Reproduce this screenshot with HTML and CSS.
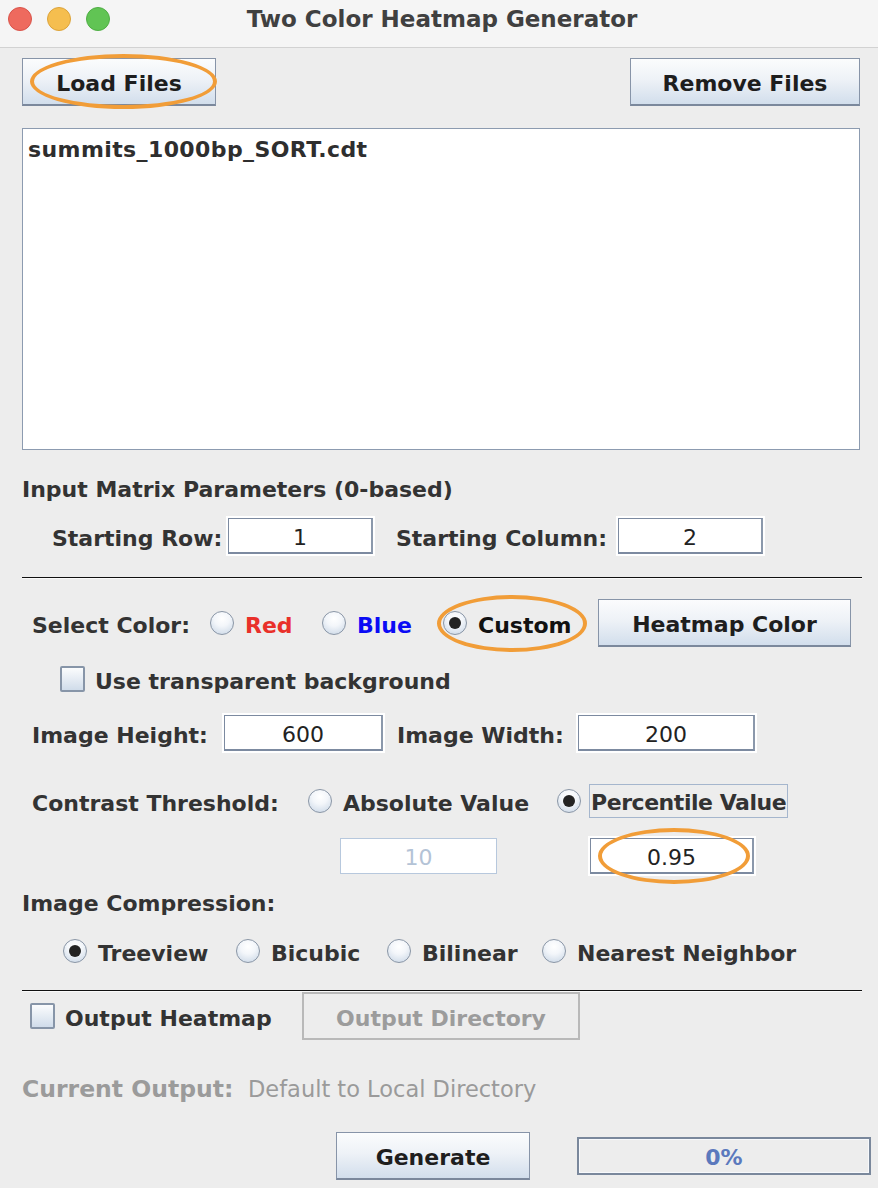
FILE: index.html
```html
<!DOCTYPE html>
<html>
<head>
<meta charset="utf-8">
<link rel="stylesheet" href="styles.css">
</head>
<body>
<div class="window">
  <div class="titlebar">
    <div class="lights">
      <span class="light red"></span>
      <span class="light yellow"></span>
      <span class="light green"></span>
    </div>
    <div class="title">Two Color Heatmap Generator</div>
  </div>
  <div class="content">
    <div class="row top-buttons">
      <div class="hl-wrap">
        <button class="btn btn-load">Load Files</button>
        <span class="ring ring-load"></span>
      </div>
      <button class="btn btn-remove">Remove Files</button>
    </div>

    <div class="filelist"><div class="file">summits_1000bp_SORT.cdt</div></div>

    <div class="section-title title-matrix">Input Matrix Parameters (0-based)</div>

    <div class="row row-start">
      <span class="label lbl-row">Starting Row:</span>
      <span class="field f-row">1</span>
      <span class="label lbl-col">Starting Column:</span>
      <span class="field f-col">2</span>
    </div>

    <div class="sep sep1"></div>

    <div class="row row-color">
      <span class="label lbl-select">Select Color:</span>
      <span class="opt opt-red"><span class="radio"></span><span class="opt-text red-text">Red</span></span>
      <span class="opt opt-blue"><span class="radio"></span><span class="opt-text blue-text">Blue</span></span>
      <span class="opt opt-custom hl-wrap"><span class="radio on"></span><span class="opt-text black-text">Custom</span><span class="ring ring-custom"></span></span>
      <button class="btn btn-heat">Heatmap Color</button>
    </div>

    <div class="row row-check">
      <span class="check"></span><span class="label check-text">Use transparent background</span>
    </div>

    <div class="row row-size">
      <span class="label lbl-height">Image Height:</span>
      <span class="field f-height">600</span>
      <span class="label lbl-width">Image Width:</span>
      <span class="field f-width">200</span>
    </div>

    <div class="row row-contrast">
      <span class="label lbl-contrast">Contrast Threshold:</span>
      <span class="opt opt-abs"><span class="radio"></span><span class="opt-text">Absolute Value</span></span>
      <span class="opt opt-pct"><span class="radio on"></span><span class="opt-text focus">Percentile Value</span></span>
    </div>

    <div class="row row-thresh">
      <span class="field disabled f-abs">10</span>
      <div class="hl-wrap f-pct-wrap">
        <span class="field f-pct">0.95</span>
        <span class="ring ring-pct"></span>
      </div>
    </div>

    <div class="section-title title-comp">Image Compression:</div>

    <div class="row row-comp">
      <span class="opt opt-tree"><span class="radio on"></span><span class="opt-text">Treeview</span></span>
      <span class="opt opt-bicubic"><span class="radio"></span><span class="opt-text">Bicubic</span></span>
      <span class="opt opt-bilinear"><span class="radio"></span><span class="opt-text">Bilinear</span></span>
      <span class="opt opt-nearest"><span class="radio"></span><span class="opt-text">Nearest Neighbor</span></span>
    </div>

    <div class="sep sep2"></div>

    <div class="row row-output">
      <span class="check"></span><span class="label check-text2">Output Heatmap</span>
      <button class="btn btn-disabled">Output Directory</button>
    </div>

    <div class="row row-current">
      <span class="label gray-bold">Current Output:</span>
      <span class="gray-normal">Default to Local Directory</span>
    </div>

    <div class="row row-generate">
      <button class="btn btn-generate">Generate</button>
      <div class="progress">0%</div>
    </div>
  </div>
</div>
</body>
</html>
```

FILE: styles.css
```css
* { box-sizing: border-box; }
html, body {
  margin: 0;
  padding: 0;
  background: #ededed;
}
body {
  width: 878px;
  height: 1188px;
  overflow: hidden;
  font-family: "DejaVu Sans", "Liberation Sans", sans-serif;
  color: #333333;
}
.window { width: 878px; }

.titlebar {
  height: 48px;
  background: #f5f5f5;
  border-bottom: 1px solid #d2d2d2;
  display: flex;
  align-items: center;
  position: relative;
}
.lights {
  display: flex;
  gap: 15px;
  padding-left: 8px;
  padding-top: 0;
  margin-top: -10px;
}
.light {
  width: 24px;
  height: 24px;
  border-radius: 50%;
  display: block;
}
.light.red { background: #ee6a5e; border: 1px solid #d9534a; }
.light.yellow { background: #f5be4f; border: 1px solid #dca33a; }
.light.green { background: #61c454; border: 1px solid #4fae44; }
.title {
  position: absolute;
  left: 0;
  right: 0;
  top: 0;
  height: 38px;
  line-height: 38px;
  text-align: center;
  font-weight: bold;
  font-size: 23px;
  color: #404040;
  padding-left: 6px;
  letter-spacing: 0;
}

.content {
  padding: 0 18px 0 22px;
}
.row {
  display: flex;
  align-items: center;
}
.row > * { flex-shrink: 0; }
.label {
  font-weight: bold;
  font-size: 22px;
  color: #333;
  white-space: nowrap;
  padding-top: 4px;
}

.btn {
  font-family: "DejaVu Sans", "Liberation Sans", sans-serif;
  font-weight: bold;
  font-size: 22px;
  color: #1e1e1e;
  height: 48px;
  border: 1px solid #8794a8;
  border-bottom: 2px solid #7b889c;
  background: linear-gradient(#fbfcfd 0%, #eef2f7 45%, #d2deec 100%);
  padding: 4px 0 0 0;
  flex-shrink: 0;
}

.hl-wrap { position: relative; display: inline-flex; align-items: center; }
.ring {
  position: absolute;
  border: 4px solid #f19d38;
  border-radius: 50%;
  pointer-events: none;
}

.top-buttons {
  margin-top: 10px;
  justify-content: space-between;
}
.btn-load { width: 194px; }
.ring-load { left: 8px; top: -4px; width: 187px; height: 55px; }
.btn-remove { width: 230px; }

.filelist {
  margin-top: 22px;
  height: 322px;
  background: #ffffff;
  border: 1px solid #8c9bb0;
}
.file {
  font-weight: bold;
  font-size: 22px;
  color: #2e2e2e;
  padding: 8px 0 0 5px;
  letter-spacing: 0.4px;
}

.section-title {
  font-weight: bold;
  font-size: 22px;
  color: #333;
  height: 26px;
  line-height: 26px;
  padding-top: 2px;
}
.title-matrix { margin-top: 25px; }

.field {
  display: flex;
  align-items: center;
  justify-content: center;
  height: 36px;
  background: #ffffff;
  border-top: 1px solid #7c8aa0;
  border-left: 1px solid #7c8aa0;
  border-right: 2px solid #8b98ab;
  border-bottom: 2px solid #7c8aa0;
  font-size: 22px;
  color: #222;
  box-shadow: 0 0 0 2px #ffffff;
  padding-top: 3px;
  flex-shrink: 0;
}
.field.disabled {
  border: 1px solid #b7c8dd;
  color: #b4c3d6;
  box-shadow: none;
}

.row-start { margin-top: 17px; height: 36px; }
.lbl-row { margin-left: 30px; width: 176px; }
.f-row { width: 145px; }
.lbl-col { margin-left: 23px; width: 222px; }
.f-col { width: 145px; }

.sep {
  height: 2px;
  border-top: 1px solid #111;
  border-bottom: 1px solid #fafafa;
  margin-right: -2px;
}
.sep1 { margin-top: 23px; }

.radio {
  width: 24px;
  height: 24px;
  border-radius: 50%;
  border: 1.5px solid #8a96a6;
  background: radial-gradient(circle at 50% 30%, #ffffff 0%, #f3f6fa 40%, #c6d4e4 100%);
  display: flex;
  align-items: center;
  justify-content: center;
  flex-shrink: 0;
}
.radio.on::after {
  content: "";
  width: 12px;
  height: 12px;
  border-radius: 50%;
  background: #232323;
}
.opt {
  display: inline-flex;
  align-items: center;
  flex-shrink: 0;
}
.opt-text {
  margin-left: 11px;
  font-weight: bold;
  font-size: 22px;
  color: #333;
  white-space: nowrap;
  padding-top: 4px;
}
.red-text { color: #e9302a; }
.blue-text { color: #0b0bf5; }
.black-text { color: #111; }

.row-color { margin-top: 20px; height: 48px; }
.lbl-select { margin-left: 10px; width: 178px; }
.opt-red { width: 112px; }
.opt-blue { width: 121px; }
.opt-custom { width: 155px; }
.ring-custom { left: -6px; top: -14px; width: 150px; height: 57px; }
.btn-heat { width: 253px; }

.check {
  width: 25px;
  height: 26px;
  border: 2px solid #8795a8;
  border-radius: 2px;
  background: linear-gradient(#fbfcfd, #d0dcea);
  flex-shrink: 0;
}
.row-check { margin-top: 19px; height: 26px; padding-left: 38px; }
.check-text { margin-left: 10px; }

.row-size { margin-top: 23px; height: 36px; }
.lbl-height { margin-left: 10px; width: 192px; }
.f-height { width: 159px; }
.lbl-width { margin-left: 14px; width: 181px; }
.f-width { width: 177px; }

.row-contrast { margin-top: 33px; height: 34px; }
.lbl-contrast { margin-left: 10px; width: 276px; }
.opt-abs { width: 249px; }
.opt-pct .opt-text { margin-left: 8px; }
.focus {
  border: 1px solid #a5b6cd;
  padding: 4px 0 0 1px;
  width: 199px;
  height: 34px;
  line-height: 28px;
  letter-spacing: -0.45px;
}

.row-thresh { margin-top: 20px; height: 36px; }
.f-abs { margin-left: 318px; width: 157px; }
.f-pct-wrap { margin-left: 93px; }
.f-pct { width: 164px; }
.ring-pct { left: 8px; top: -10px; width: 152px; height: 56px; }

.title-comp { margin-top: 15px; }

.row-comp { margin-top: 23px; height: 26px; }
.opt-tree { margin-left: 41px; width: 173px; }
.opt-bicubic { width: 151px; }
.opt-bilinear { width: 155px; }

.sep2 { margin-top: 26px; }

.row-output { height: 48px; }
.row-output .check { margin-left: 8px; }
.check-text2 { margin-left: 10px; width: 237px; }
.btn-disabled {
  width: 278px;
  background: #ededed;
  border: 2px solid #b9b9b9;
  color: #9c9c9c;
}

.row-current { margin-top: 34px; height: 26px; }
.gray-bold {
  color: #9b9b9b;
  width: 226px;
  font-size: 23.5px;
}
.gray-normal {
  color: #9a9a9a;
  font-size: 22.5px;
  white-space: nowrap;
  padding-top: 4px;
}

.row-generate { margin-top: 32px; height: 48px; }
.btn-generate { margin-left: 314px; width: 194px; }
.progress {
  margin-left: 47px;
  width: 294px;
  height: 38px;
  border: 2px solid #7a889c;
  background: #ededed;
  display: flex;
  align-items: center;
  justify-content: center;
  font-weight: bold;
  font-size: 22px;
  color: #5b79bd;
  padding-top: 3px;
  box-shadow: inset 0 0 0 1px #f7f9fc;
  flex-shrink: 0;
}
```
